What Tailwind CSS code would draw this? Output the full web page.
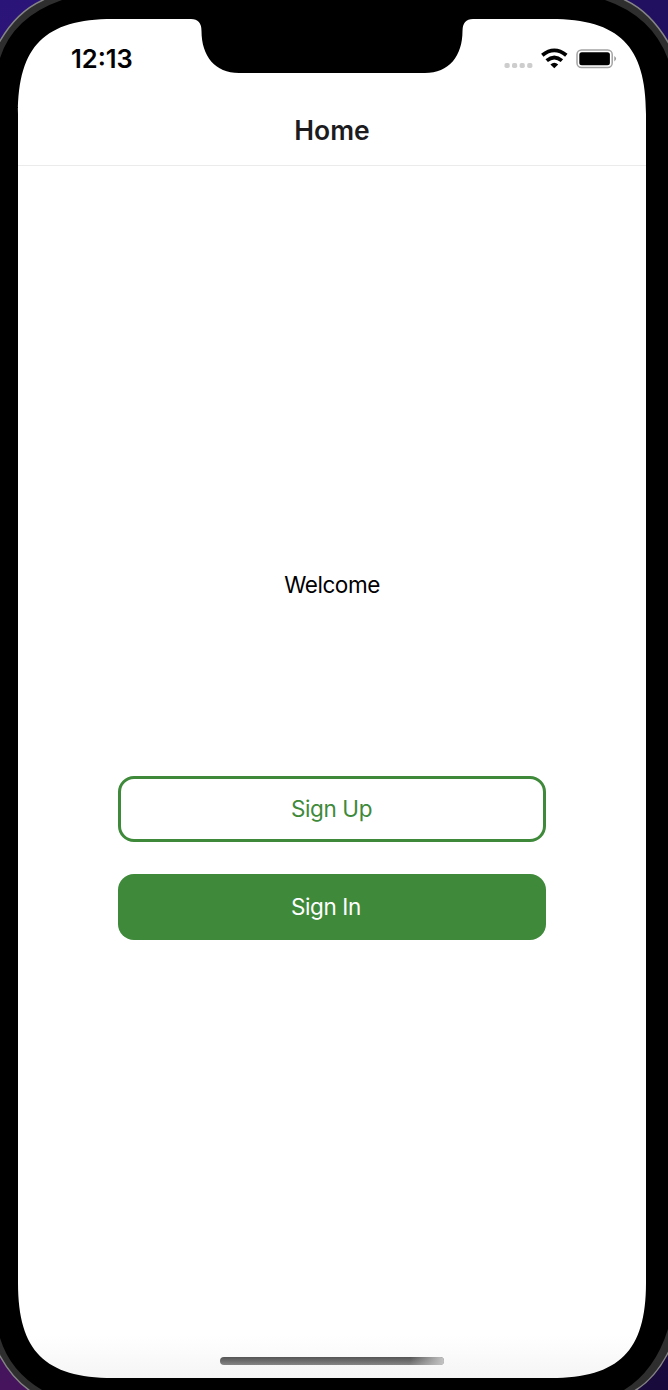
<!DOCTYPE html>
<html lang="en">
<head>
<meta charset="utf-8">
<title>Home</title>
<script src="https://cdn.jsdelivr.net/npm/@tailwindcss/browser@4"></script>
</head>
<body class="relative h-[1390px] w-[668px] overflow-hidden bg-black font-['Inter',sans-serif]">
<!-- device frame and screen -->
<svg class="absolute inset-0" width="668" height="1390" viewBox="0 0 668 1390">
  <defs>
    <linearGradient id="l" x1="0" y1="0" x2="0" y2="1"><stop offset="0" stop-color="#2b1478"/><stop offset="1" stop-color="#45145c"/></linearGradient>
    <linearGradient id="r" x1="0" y1="0" x2="0" y2="1"><stop offset="0" stop-color="#211060"/><stop offset="1" stop-color="#190a3c"/></linearGradient>
    <linearGradient id="s" x1="0" y1="1335" x2="0" y2="1378" gradientUnits="userSpaceOnUse"><stop offset="0" stop-color="#fff"/><stop offset="1" stop-color="#f5f5f5"/></linearGradient>
  </defs>
  <path fill="url(#l)" d="M0 0H334V1390H0z"/>
  <path fill="url(#r)" d="M334 0H668V1390H334z"/>
  <path fill="#2e2e2e" stroke="#858585" stroke-width="1.500" d="M-4 47L0 41Q17 11.500 43 0L50 -4H618L625 0Q650 11.500 668 42L672 49V1346L668 1353Q655 1378 636 1390L630 1394H35L29 1390Q12 1378 0 1356L-4 1348z"/>
  <path d="M-4 70L0 58Q13 17 62 0L76 -4H590L605 0Q652 16 668 59L672 70V1317L668 1329Q655 1371 624 1390L616 1394H50L42 1390Q10 1371 0 1338L-4 1326z"/>
  <path fill="url(#s)" d="M18 114C18 46 45 19 113 19H191Q201.500 19 201.500 31C201.500 56 215 73 239 73H425C449 73 462.500 56 462.500 31Q462.500 19 473 19H551C619 19 646 46 646 114V1283C646 1351 619 1378 551 1378H113C45 1378 18 1351 18 1283z"/>
</svg>
<main class="relative ml-[18px] flex h-[1378px] w-[628px] flex-col pt-[19px]">
  <div class="flex h-[76px] items-start justify-between pl-[53px] pr-[29px]">
    <span class="pt-[24px] text-[25.500px] leading-8 font-semibold text-black">12:13</span>
    <svg class="mt-[26px]" width="113" height="28" viewBox="504 45 113 28">
      <g fill="#cdcdcd"><rect x="504.500" y="63" width="5.200" height="5" rx="1.800"/><rect x="512" y="63" width="5.200" height="5" rx="1.800"/><rect x="519.600" y="63" width="5.200" height="5" rx="1.800"/><rect x="527.200" y="63" width="5.200" height="5" rx="1.800"/></g>
      <g fill="none" stroke="#000" stroke-width="3.800"><path d="M542.300 55.300Q554.300 45.500 566.300 55.300"/><path d="M546.700 60.600Q554.300 54.400 561.900 60.600"/></g>
      <path d="M550.400 64.600Q554.300 61 558.200 64.600L554.300 68.300z"/>
      <rect x="577" y="50" width="35.200" height="17.500" rx="4.500" fill="none" stroke="#a3a3a3" stroke-width="1.500"/>
      <rect x="579.300" y="52.300" width="30.600" height="12.900" rx="2.500"/>
      <path fill="#999" d="M614.300 56q3.600 2.700 0 5.400z"/>
    </svg>
  </div>
  <header class="flex h-[71px] items-center justify-center border-b border-[#ebebeb]">
    <h1 class="text-[26.500px] leading-8 font-semibold text-[#1c1c1e]">Home</h1>
  </header>
  <p class="mt-[403px] text-center text-[22.500px] leading-8 tracking-[-0.450px] text-black">Welcome</p>
  <div class="mx-[100px] mt-[175px] flex flex-col gap-8">
    <button class="flex h-[66px] items-center rounded-[16px] border-[3px] border-[#3e8a3a] pl-[170px] text-[22.500px] tracking-[-0.400px] text-[#3e8a3a]">Sign Up</button>
    <button class="flex h-[66px] items-center rounded-[16px] bg-[#3e8a3a] pl-[173px] text-[22.500px] tracking-[-0.400px] text-white">Sign In</button>
  </div>
  <div class="mx-auto mt-auto mb-[13px] h-2 w-[224px] overflow-hidden rounded-full bg-linear-to-b from-[#555] to-[#858585]"><div class="h-full bg-linear-to-r from-transparent from-85% to-[#c4c4c4]"></div></div>
</main>
</body>
</html>
